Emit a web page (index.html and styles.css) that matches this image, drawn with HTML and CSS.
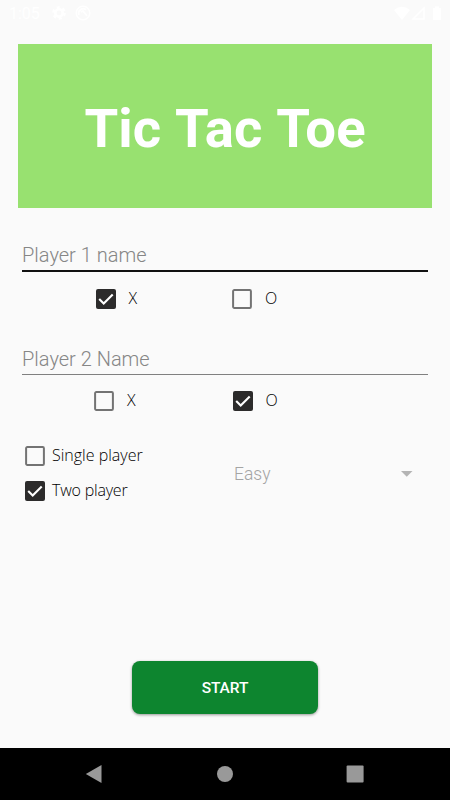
FILE: index.html
```html
<!DOCTYPE html>
<html lang="en">
<head>
<meta charset="utf-8">
<title>Tic Tac Toe</title>
<link rel="stylesheet" href="styles.css">
</head>
<body>
<div class="screen">
  <header class="status">
    <span class="clock">1:05</span>
    <svg class="gear" width="14" height="14" viewBox="0 0 14 14"><circle cx="7" cy="7" r="3.7" fill="none" stroke="#fff" stroke-width="2.6"/><circle cx="7" cy="7" r="5.7" fill="none" stroke="#fff" stroke-width="2.2" stroke-dasharray="3 2.97"/></svg>
    <svg class="app" width="16" height="16" viewBox="0 0 16 16" fill="none" stroke="#fff"><circle cx="8" cy="8" r="6.8" stroke-width="1.4"/><path d="M4 10A4.5 4.5 0 0 1 11 4.8M6 7l2-1 4 5" stroke-width="1.8"/></svg>
    <svg class="signals" width="50" height="16" viewBox="0 0 50 16" fill="#fff"><path d="M0 4Q8-2.5 16 4L8 14Z"/><path d="M19 13 30 2v11Z" fill="none" stroke="#fff" stroke-width="1.5"/><path d="M39 2h2V.5h4V2h2v12h-8Z"/></svg>
  </header>
  <main class="content">
    <h1 class="banner">Tic Tac Toe</h1>
    <section class="player first">
      <div class="field active">Player 1 name</div>
      <div class="marks">
        <label class="option"><svg class="box" viewBox="0 0 20 20"><use href="#checked"/></svg><span>X</span></label>
        <label class="option"><svg class="box" viewBox="0 0 20 20"><use href="#empty"/></svg><span>O</span></label>
      </div>
    </section>
    <section class="player second">
      <div class="field">Player 2 Name</div>
      <div class="marks">
        <label class="option"><svg class="box" viewBox="0 0 20 20"><use href="#empty"/></svg><span>X</span></label>
        <label class="option"><svg class="box" viewBox="0 0 20 20"><use href="#checked"/></svg><span>O</span></label>
      </div>
    </section>
    <section class="mode">
      <div class="modes">
        <label class="option"><svg class="box" viewBox="0 0 20 20"><use href="#empty"/></svg><span class="single">Single player</span></label>
        <label class="option"><svg class="box" viewBox="0 0 20 20"><use href="#checked"/></svg><span class="two">Two player</span></label>
      </div>
      <div class="level"><span>Easy</span><svg width="12" height="6" viewBox="0 0 12 6"><path d="M0 0h11.5L5.75 5.8Z" fill="#b4b4b4"/></svg></div>
    </section>
    <button class="start">START</button>
  </main>
  <nav class="nav">
    <svg width="18" height="20" viewBox="0 0 18 20"><path d="M.8 10 16.5 1v18Z" fill="#999"/></svg>
    <svg width="18" height="20" viewBox="0 0 18 20"><circle cx="9" cy="10" r="8" fill="#999"/></svg>
    <svg width="18" height="20" viewBox="0 0 18 20"><rect x=".6" y="1.5" width="17" height="17" rx="1" fill="#999"/></svg>
  </nav>
</div>
<svg class="defs" width="0" height="0">
  <symbol id="empty" viewBox="0 0 20 20"><rect x="1.1" y="1.1" width="17.8" height="17.8" rx="1.2" fill="none" stroke="#737373" stroke-width="2"/></symbol>
  <symbol id="checked" viewBox="0 0 20 20"><rect width="20" height="20" rx="2" fill="#2c2b2b"/><path d="M3.2 10 7.7 14.5 16.7 5.4" fill="none" stroke="#fff" stroke-width="2.1"/></symbol>
</svg>
</body>
</html>
```
FILE: styles.css
```css
* { box-sizing: border-box; }
body { margin: 0; font-family: Roboto, sans-serif; }
.screen { width: 450px; height: 800px; display: flex; flex-direction: column; background: #fafafa; overflow: hidden; }
.status { height: 44px; display: flex; align-items: flex-start; padding: 6px 11px 0 9px; color: #fff; }
.clock { width: 43px; font-size: 16px; line-height: 16px; }
.gear { margin-right: 9px; }
.app { margin-top: -1px; }
.signals { margin-left: auto; margin-right: -5px; }
.content { height: 704px; padding: 0 18px; display: flex; flex-direction: column; }
.banner { flex: none; margin: 0; height: 164px; background: #98e170; color: #fff; font-size: 54.5px; line-height: 169px; font-weight: 700; word-spacing: 1.8px; text-align: center; white-space: nowrap; }
.player { padding: 0 4px; flex: none; }
.first { height: 104px; padding-top: 34px; }
.second { height: 128px; padding-top: 34px; }
.field { height: 29px; border-bottom: 1px solid #808080; color: #868686; font-size: 20px; font-weight: 300; line-height: 27px; white-space: nowrap; }
.field.active { height: 30px; border-bottom: 2px solid #111; line-height: 26px; }
.marks { display: grid; grid-template-columns: 136.5px 1fr; padding: 16.5px 0 0 73.5px; }
.second .marks { grid-template-columns: 138.5px 1fr; padding: 16px 0 0 72px; }
.option { display: flex; align-items: center; height: 20px; gap: 13px; font-family: "Open Sans", sans-serif; font-weight: 300; font-size: 16px; line-height: 20px; color: #000; white-space: nowrap; }
.option span { padding-bottom: 2px; }
.box { width: 20px; height: 20px; flex: none; }
.defs { position: absolute; }
.mode { height: 221px; flex: none; display: flex; padding: 5.5px 7px 0; }
.modes { width: 209px; display: flex; flex-direction: column; gap: 15px; }
.modes .option { gap: 7px; }
.two { letter-spacing: -.2px; }
.level { flex: 1; height: 20px; margin-top: 18px; display: flex; justify-content: space-between; align-items: center; padding-right: 12px; color: #a4a4a4; font-size: 17.5px; font-weight: 300; }
.start { flex: none; align-self: center; width: 186px; height: 53px; border: 0; border-radius: 8px; background: #0d852f; color: #fff; font: 500 15.5px/54px Roboto, sans-serif; letter-spacing: -.1px; padding: 0; box-shadow: 0 1px 3px rgba(0,0,0,.4); }
.nav { height: 52px; background: #000; display: flex; justify-content: space-between; align-items: center; padding: 0 86px 0 85px; }
```
